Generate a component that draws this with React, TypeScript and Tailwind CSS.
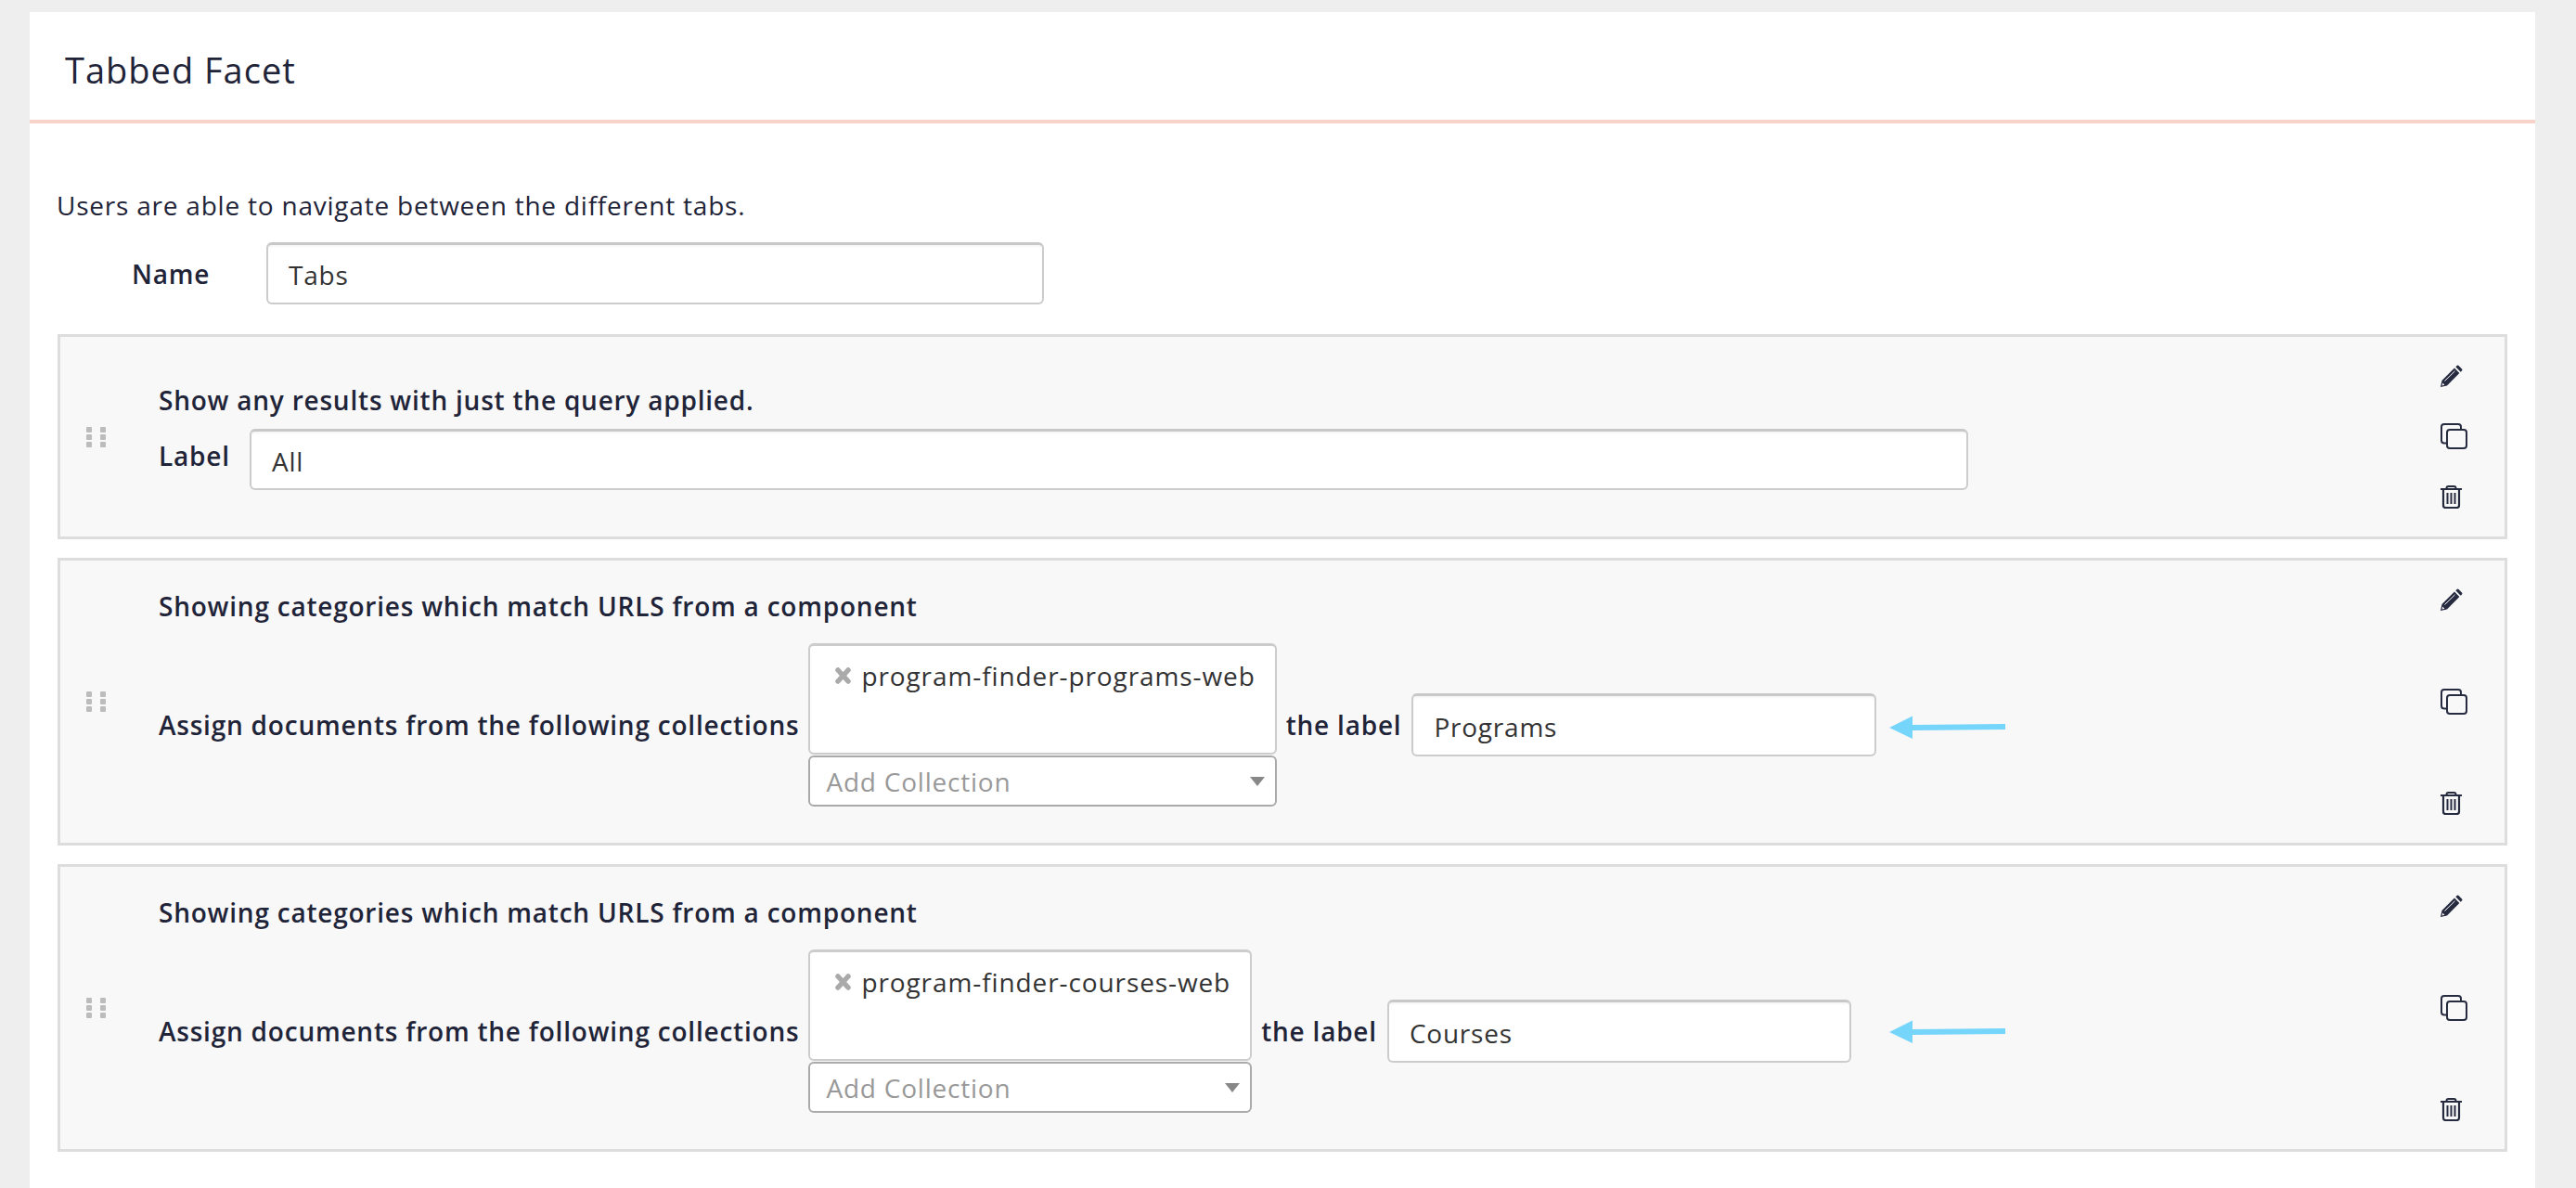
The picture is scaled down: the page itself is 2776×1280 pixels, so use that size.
import type { ReactNode } from "react";

const iconColor = "#262b40";

function GripIcon() {
    return (
        <div className="grid grid-cols-2 gap-x-[9px] gap-y-[2px] w-[21px] shrink-0">
            {[0, 1, 2, 3, 4, 5].map((i) => (
                <span key={i} className="block w-[6px] h-[6px] rounded-[1px] bg-[#bcbcbc]" />
            ))}
        </div>
    );
}

function PencilIcon() {
    return (
        <svg width="24" height="24" viewBox="0 0 24 24" className="block">
            <path d="M1.5 17 L15 3.6 L20.4 9 L7 22.5 L0 24 Z" fill={iconColor} />
            <path d="M16.3 2.3 L17.6 1 Q18.6 0 19.6 1 L23 4.4 Q24 5.4 23 6.4 L21.7 7.7 Z" fill={iconColor} />
            <path d="M4.5 17.5 L15.5 6.8" stroke="#f8f8f8" strokeWidth="1" />
            <path d="M1.6 22.4 L2.2 19.6 L4.4 21.8 Z" fill="#f8f8f8" />
        </svg>
    );
}

function CopyIcon() {
    return (
        <svg width="29" height="28" viewBox="0 0 29 28" fill="none" stroke={iconColor} strokeWidth="2" className="block">
            <path d="M6 21.5 H4 a3 3 0 0 1 -3 -3 V4 a3 3 0 0 1 3 -3 H19 a3 3 0 0 1 3 3 V6.5" />
            <rect x="7" y="7" width="21" height="20" rx="3" />
        </svg>
    );
}

function TrashIcon() {
    return (
        <svg width="23" height="25" viewBox="0 0 23 25" fill="none" stroke={iconColor} className="block">
            <path d="M0 4 H23" strokeWidth="2" />
            <path d="M6.5 4 V3 a2 2 0 0 1 2 -2 H14.5 a2 2 0 0 1 2 2 V4" strokeWidth="2" />
            <path d="M3 4 V21.5 a2.5 2.5 0 0 0 2.5 2.5 H17.5 a2.5 2.5 0 0 0 2.5 -2.5 V4" strokeWidth="2.2" />
            <path d="M7.5 8 V20 M11.5 8 V20 M15.5 8 V20" strokeWidth="2" />
        </svg>
    );
}

function RemoveIcon() {
    return (
        <svg width="19" height="18" viewBox="0 0 19 18" className="block shrink-0">
            <path d="M4 3 L15 15 M15 3 L4 15" stroke="#aaaaaa" strokeWidth="5.5" strokeLinecap="round" />
        </svg>
    );
}

function ArrowIcon() {
    return (
        <svg width="125" height="26" viewBox="0 0 125 26" className="block shrink-0">
            <path d="M0 13 L25 0.5 V10 L125 9 V15 L25 16 V25 Z" fill="#76d5fb" />
        </svg>
    );
}

function TextBox({ value, className }: { value: string; className: string }) {
    return (
        <div className={`flex items-center bg-white border-2 border-[#cccccc] border-t-[3px] border-t-[#c8c8c8] rounded-[6px] shadow-[inset_0_2px_2px_rgba(0,0,0,0.04)] text-[28px] text-[#333333] pt-[2px] pl-[22px] ${className}`}>
            {value}
        </div>
    );
}

function FacetCard({ title, grow, children }: { title: string; grow: string; children: ReactNode }) {
    return (
        <section className="flex items-center border-[3px] border-[#dddddd] bg-[#f8f8f8] pl-[28px] pr-[40px]">
            <GripIcon />
            <div className={`flex-1 flex flex-col ml-[57px] ${grow}`}>
                <h3 className="h-[40px] leading-[40px] text-[28px] font-semibold">{title}</h3>
                {children}
            </div>
            <div className="flex flex-col justify-between self-stretch w-[29px] py-[30px]">
                <PencilIcon />
                <CopyIcon />
                <TrashIcon />
            </div>
        </section>
    );
}

function CollectionRow({ tag, label, inputWidth, arrowOffset }: { tag: string; label: string; inputWidth: string; arrowOffset: string }) {
    return (
        <div className="flex items-center mt-[20px]">
            <span className="text-[28px] font-semibold whitespace-nowrap">Assign documents from the following collections</span>
            <div className="inline-flex flex-col ml-[10px]">
                <div className="h-[120px] flex items-start gap-[10px] bg-white border-2 border-[#cccccc] border-t-[3px] rounded-[6px] pl-[26px] pr-[21px] pt-[11px] text-[28px] text-[#333333] tracking-[0.9px] whitespace-nowrap">
                    <span className="mt-[12px]"><RemoveIcon /></span>
                    <span>{tag}</span>
                </div>
                <div className="h-[55px] mt-[1px] flex items-center justify-between bg-white border-2 border-[#aaaaaa] rounded-[6px] pl-[17px] pr-[11px] text-[28px] text-[#999999]">
                    <span>Add Collection</span>
                    <span className="w-0 h-0 border-x-[8px] border-x-transparent border-t-[10px] border-t-[#888888]" />
                </div>
            </div>
            <span className="ml-[10px] text-[28px] font-semibold whitespace-nowrap">the label</span>
            <TextBox value={label} className={`ml-[11px] h-[68px] ${inputWidth}`} />
            <div className={arrowOffset}><ArrowIcon /></div>
        </div>
    );
}

export default function App() {
    return (
        <div className="min-h-[1280px] bg-[#eeeeee] pt-[13px] pl-[32px] pr-[44px] text-[#1f2438] tracking-[0.78px]" style={{ fontFamily: '"Open Sans", sans-serif' }}>
            <main className="min-h-[1267px] bg-white">
                <header className="h-[120px] flex items-center pl-[38px] pt-[8px] border-b-4 border-[#f8d3ca]">
                    <h1 className="text-[38px] font-normal tracking-[1px]">Tabbed Facet</h1>
                </header>
                <div className="px-[30px]">
                    <p className="mt-[68px] -ml-[1px] h-[40px] leading-[40px] text-[28px]">Users are able to navigate between the different tabs.</p>
                    <div className="flex items-center mt-[20px]">
                        <label className="ml-[80px] w-[145px] text-[28px] font-semibold">Name</label>
                        <TextBox value="Tabs" className="h-[67px] w-[838px]" />
                    </div>
                    <div className="flex flex-col gap-[20px] mt-[32px]">
                        <FacetCard title="Show any results with just the query applied." grow="pt-[48px] pb-[50px]">
                            <div className="flex items-center mt-[11px]">
                                <label className="w-[98px] text-[28px] font-semibold mb-[8px]">Label</label>
                                <TextBox value="All" className="h-[66px] w-[1852px]" />
                            </div>
                        </FacetCard>
                        <FacetCard title="Showing categories which match URLS from a component" grow="pt-[29px] pb-[39px]">
                            <CollectionRow tag="program-finder-programs-web" label="Programs" inputWidth="w-[501px]" arrowOffset="ml-[14px] mt-[6px]" />
                        </FacetCard>
                        <FacetCard title="Showing categories which match URLS from a component" grow="pt-[29px] pb-[39px]">
                            <CollectionRow tag="program-finder-courses-web" label="Courses" inputWidth="w-[500px]" arrowOffset="ml-[41px] mt-[2px]" />
                        </FacetCard>
                    </div>
                </div>
            </main>
        </div>
    );
}
